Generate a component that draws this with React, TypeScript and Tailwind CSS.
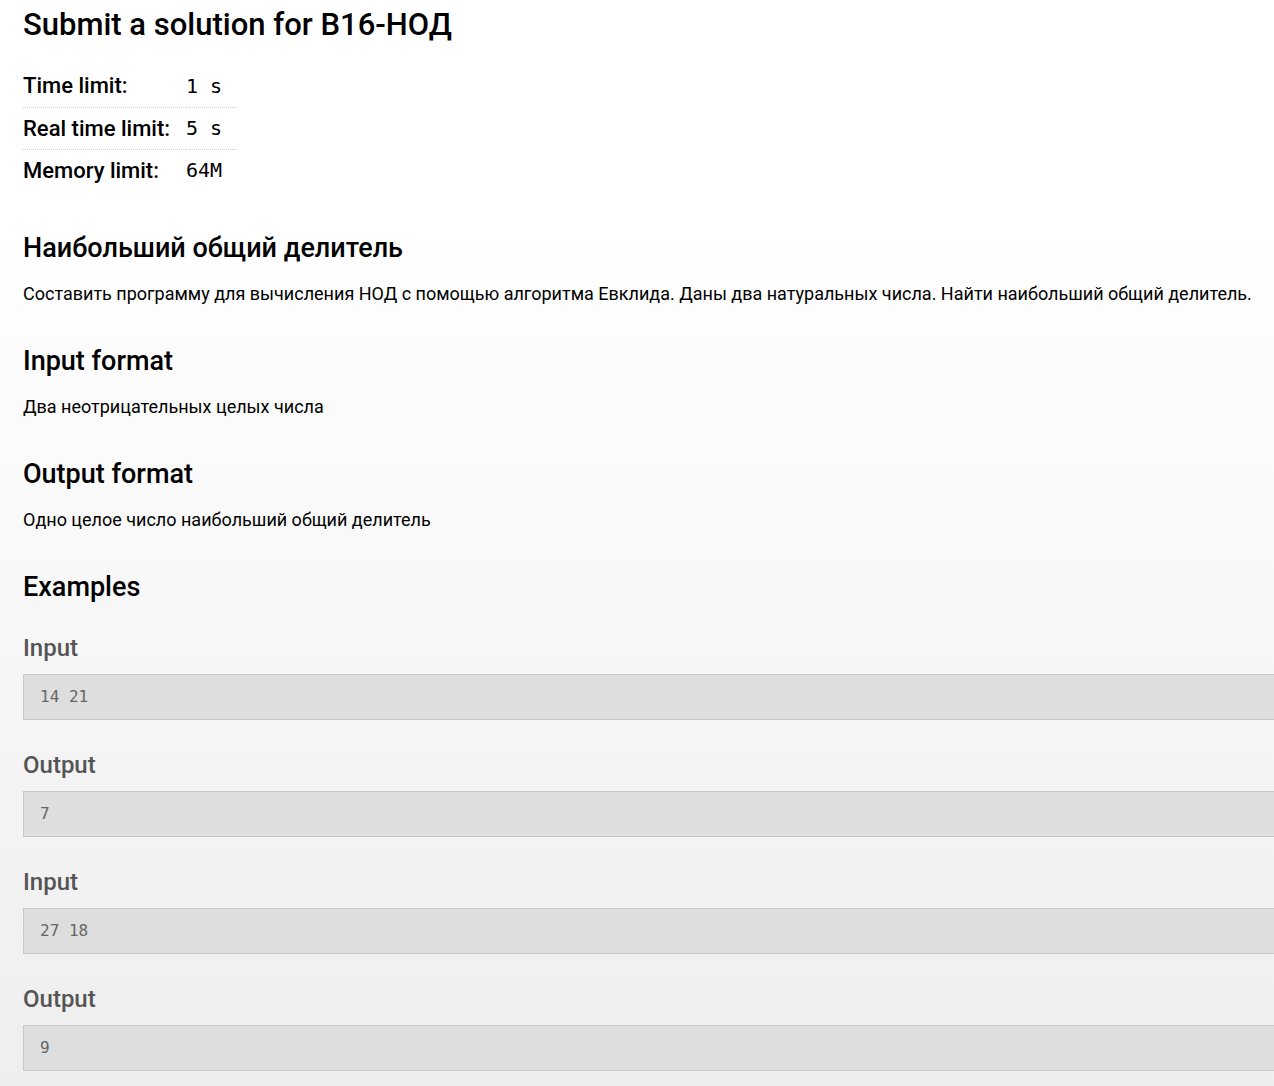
import React from 'react';

const limits = [
  { label: 'Time limit:', value: '1 s' },
  { label: 'Real time limit:', value: '5 s' },
  { label: 'Memory limit:', value: '64M' },
];

const examples = [
  { title: 'Input', data: '14 21' },
  { title: 'Output', data: '7' },
  { title: 'Input', data: '27 18' },
  { title: 'Output', data: '9' },
];

const mono = { fontFamily: '"DejaVu Sans Mono", "Liberation Mono", monospace' };

const App: React.FC = () => {
  return (
    <div className="min-h-screen overflow-hidden bg-gradient-to-b from-white from-20% to-[#eeeeee] pl-[23px] pt-[5px] text-black font-['Roboto',sans-serif]">
      {/* Title */}
      <h1 className="text-[31px] leading-[40px] font-medium whitespace-nowrap">Submit a solution for B16-НОД</h1>

      {/* Limits */}
      <table className="mt-[20px] border-collapse">
        <tbody>
          {limits.map((row, i) => (
            <tr key={row.label} className={i < limits.length - 1 ? 'border-b border-dotted border-[#d0d0d0]' : ''}>
              <td className="w-[163px] h-[42px] p-0 text-[22px] font-medium whitespace-nowrap">{row.label}</td>
              <td className="w-[51px] h-[42px] p-0 text-[20px] whitespace-pre" style={mono}>{row.value}</td>
            </tr>
          ))}
        </tbody>
      </table>

      {/* Statement */}
      <h2 className="mt-[41px] text-[27px] leading-[32px] font-medium">Наибольший общий делитель</h2>
      <p className="mt-[18px] text-[18px] leading-[24px] whitespace-nowrap">
        Составить программу для вычисления НОД с помощью алгоритма Евклида. Даны два натуральных числа. Найти наибольший общий делитель.
      </p>

      <h2 className="mt-[39px] text-[27px] leading-[32px] font-medium">Input format</h2>
      <p className="mt-[18px] text-[18px] leading-[24px]">Два неотрицательных целых числа</p>

      <h2 className="mt-[39px] text-[27px] leading-[32px] font-medium">Output format</h2>
      <p className="mt-[18px] text-[18px] leading-[24px]">Одно целое число наибольший общий делитель</p>

      <h2 className="mt-[39px] text-[27px] leading-[32px] font-medium">Examples</h2>

      {/* Examples */}
      <div className="mt-[1px]">
        {examples.map((ex, i) => (
          <div key={i} className="mt-[30px]">
            <div className="text-[24px] leading-[30px] font-medium text-[#555555]">{ex.title}</div>
            <div className="mt-[11px] -mr-[10px] h-[46px] flex items-center pl-4 border border-[#c8c8c8] bg-[#dedede] text-[16px] text-[#666666] whitespace-pre" style={mono}>
              {ex.data}
            </div>
          </div>
        ))}
      </div>
      <div className="h-[20px]" />
    </div>
  );
};

export default App;
